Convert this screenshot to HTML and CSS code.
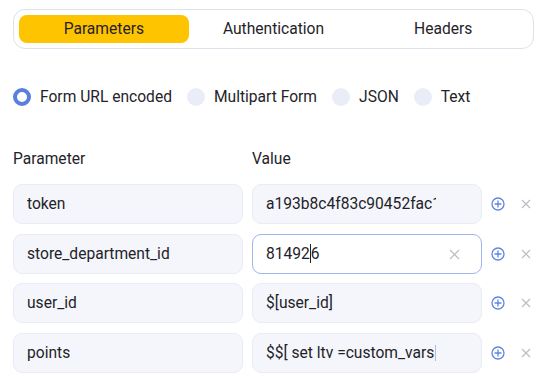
FILE: index.html
```html
<!DOCTYPE html>
<html>
<head>
<meta charset="utf-8">
<link rel="stylesheet" href="styles.css">
</head>
<body>
<div class="page">
  <div class="tabs">
    <div class="tab active">Parameters</div>
    <div class="tab">Authentication</div>
    <div class="tab">Headers</div>
  </div>

  <div class="radios">
    <div class="radio checked"><span class="dot"></span><span class="rlabel">Form URL encoded</span></div>
    <div class="radio"><span class="dot"></span><span class="rlabel">Multipart Form</span></div>
    <div class="radio"><span class="dot"></span><span class="rlabel">JSON</span></div>
    <div class="radio"><span class="dot"></span><span class="rlabel">Text</span></div>
  </div>

  <div class="heads">
    <div class="head">Parameter</div>
    <div class="head">Value</div>
  </div>

  <div class="rows">
    <div class="row">
      <div class="field"><span class="txt">token</span></div>
      <div class="field value first"><span class="txt">a193b8c4f83c90452fac1e7d</span></div>
      <div class="actions">
        <svg class="plus" width="14" height="14" viewBox="0 0 14 14"><circle cx="7" cy="7" r="6" fill="none" stroke="#5f86de" stroke-width="1.3"/><path d="M7 4v6M4 7h6" stroke="#5f86de" stroke-width="1.3" stroke-linecap="round"/></svg>
        <svg class="del" width="10" height="10" viewBox="0 0 10 10"><path d="M1 1l8 8M9 1l-8 8" stroke="#b9bdc7" stroke-width="1.2"/></svg>
      </div>
    </div>
    <div class="row">
      <div class="field"><span class="txt">store_department_id</span></div>
      <div class="field value focus"><span class="txt">81492<span class="caret"></span>6</span>
        <svg class="clear" width="11" height="11" viewBox="0 0 11 11"><path d="M1 1l9 9M10 1l-9 9" stroke="#b9bdc7" stroke-width="1.2"/></svg>
      </div>
      <div class="actions">
        <svg class="plus" width="14" height="14" viewBox="0 0 14 14"><circle cx="7" cy="7" r="6" fill="none" stroke="#5f86de" stroke-width="1.3"/><path d="M7 4v6M4 7h6" stroke="#5f86de" stroke-width="1.3" stroke-linecap="round"/></svg>
        <svg class="del" width="10" height="10" viewBox="0 0 10 10"><path d="M1 1l8 8M9 1l-8 8" stroke="#b9bdc7" stroke-width="1.2"/></svg>
      </div>
    </div>
    <div class="row">
      <div class="field"><span class="txt">user_id</span></div>
      <div class="field value"><span class="txt">$[user_id]</span></div>
      <div class="actions">
        <svg class="plus" width="14" height="14" viewBox="0 0 14 14"><circle cx="7" cy="7" r="6" fill="none" stroke="#5f86de" stroke-width="1.3"/><path d="M7 4v6M4 7h6" stroke="#5f86de" stroke-width="1.3" stroke-linecap="round"/></svg>
        <svg class="del" width="10" height="10" viewBox="0 0 10 10"><path d="M1 1l8 8M9 1l-8 8" stroke="#b9bdc7" stroke-width="1.2"/></svg>
      </div>
    </div>
    <div class="row">
      <div class="field"><span class="txt">points</span></div>
      <div class="field value"><span class="txt">$$[ set ltv =custom_vars<span class="edge"></span></span></div>
      <div class="actions">
        <svg class="plus" width="14" height="14" viewBox="0 0 14 14"><circle cx="7" cy="7" r="6" fill="none" stroke="#5f86de" stroke-width="1.3"/><path d="M7 4v6M4 7h6" stroke="#5f86de" stroke-width="1.3" stroke-linecap="round"/></svg>
        <svg class="del" width="10" height="10" viewBox="0 0 10 10"><path d="M1 1l8 8M9 1l-8 8" stroke="#b9bdc7" stroke-width="1.2"/></svg>
      </div>
    </div>
  </div>
</div>
</body>
</html>
```

FILE: styles.css
```css
* { box-sizing: border-box; }
html, body { margin: 0; padding: 0; background: #fff; }
body {
  font-family: Roboto, "Liberation Sans", sans-serif;
  font-size: 15.6px;
  color: #1f2329;
}
.page {
  width: 539px;
  height: 381px;
  padding: 9px 5px 0 13px;
  overflow: hidden;
}
.tabs {
  display: flex;
  height: 40px;
  border: 1px solid #dde1ec;
  border-radius: 12px;
  padding: 5px;
}
.tab {
  flex: 1;
  display: flex;
  align-items: center;
  justify-content: center;
  border-radius: 8px;
  color: #1f2329;
}
.tab.active {
  background: #ffc400;
}
.radios {
  display: flex;
  align-items: center;
  margin-top: 39px;
  height: 18px;
}
.radio {
  display: flex;
  align-items: center;
  margin-right: 15px;
}
.dot {
  width: 18px;
  height: 18px;
  border-radius: 50%;
  background: #e8edf7;
  margin-right: 9px;
}
.radio.checked .dot {
  background: #fff;
  border: 4px solid #5a7fdc;
}
.heads {
  display: flex;
  margin-top: 43px;
  height: 20px;
  line-height: 20px;
}
.head { width: 239px; }
.rows {
  margin-top: 15px;
  display: flex;
  flex-direction: column;
  gap: 9.5px;
}
.row {
  display: flex;
  align-items: center;
  gap: 9px;
}
.field {
  position: relative;
  width: 230px;
  height: 40px;
  background: #f4f6fb;
  border: 1px solid #e9ecf4;
  border-radius: 9px;
  padding: 0 13px;
  display: flex;
  align-items: center;
  overflow: hidden;
}
.field.value {
  padding-right: 44px;
}
.field.value.first {
  padding-right: 45.5px;
}
.txt {
  white-space: nowrap;
  overflow: hidden;
  display: block;
  width: 100%;
}
.field.focus {
  background: #fff;
  border-color: #9fb5ee;
}
.caret {
  display: inline-block;
  width: 1px;
  height: 19px;
  background: #1f2329;
  vertical-align: -4px;
}
.edge {
  display: inline-block;
  width: 1px;
  height: 16px;
  background: #b9bdc7;
  margin-left: 1px;
  vertical-align: -3px;
}
.clear {
  position: absolute;
  right: 21px;
  top: 14px;
}
.actions {
  display: flex;
  align-items: center;
  gap: 16px;
}
```
